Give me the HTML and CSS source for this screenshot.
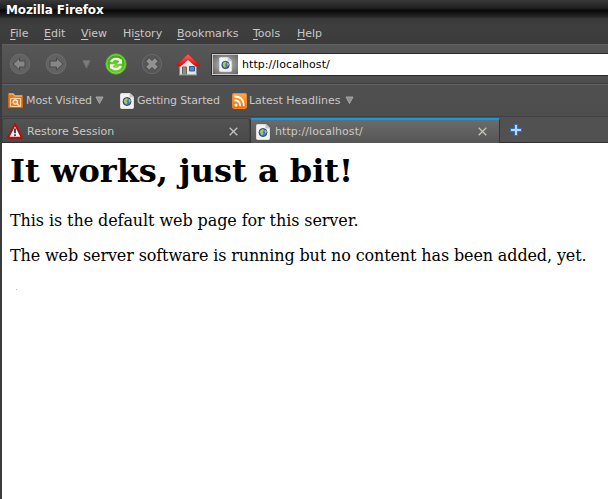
FILE: index.html
```html
<!DOCTYPE html>
<html lang="en">
<head>
<meta charset="utf-8">
<title>Mozilla Firefox</title>
<link rel="stylesheet" href="styles.css">
</head>
<body>
<svg width="0" height="0" class="defs">
  <defs>
    <linearGradient id="orange" x2="0" y2="1"><stop stop-color="#ffa94a"/><stop offset="1" stop-color="#e96c05"/></linearGradient>
    <linearGradient id="red" x2="0" y2="1"><stop stop-color="#ff6a60"/><stop offset="1" stop-color="#d50c0c"/></linearGradient>
    <radialGradient id="green" cx=".5" cy=".65"><stop stop-color="#8be03c"/><stop offset="1" stop-color="#45a81a"/></radialGradient>
    <symbol id="page" viewBox="0 0 14 16">
      <path d="M.5 1.500q0-1 1-1H10L13.500 4v10.500q0 1-1 1h-11q-1 0-1-1z" fill="#f3f3f1" stroke="#deded9"/>
      <path d="M10 .5V4h3.500z" fill="#cfcfca" stroke="#b5b5b0" stroke-width=".6"/>
      <circle cx="7" cy="8.500" r="4" fill="#4878b4" stroke="#20446e" stroke-width=".9"/>
      <path d="M3.800 7.500Q5 5 7 5L8 6.500 6.500 8l1 1.500L6 11.500 4.500 9.500zM8.500 6.500l1.500-.5.8 2-1.300 2z" fill="#a9c46a"/>
    </symbol>
  </defs>
</svg>
<div class="window">
  <header class="title">Mozilla Firefox</header>
  <nav class="menu">
    <span><u>F</u>ile</span><span><u>E</u>dit</span><span><u>V</u>iew</span><span>Hi<u>s</u>tory</span><span><u>B</u>ookmarks</span><span><u>T</u>ools</span><span><u>H</u>elp</span>
  </nav>
  <div class="toolbar">
    <svg class="back" width="22" height="22" viewBox="0 0 22 22"><circle cx="11" cy="11" r="9.800" fill="#626262" stroke="#6d6d6d"/><path d="M4 11L10.500 5V8H16v6h-5.500v3z" fill="#868686" stroke="#484848"/></svg>
    <svg class="forward" width="22" height="22" viewBox="0 0 22 22"><circle cx="11" cy="11" r="9.800" fill="#626262" stroke="#6d6d6d"/><path d="M18 11L11.500 5V8H5v6h6.500v3z" fill="#868686" stroke="#484848"/></svg>
    <svg class="history" width="9" height="9" viewBox="0 0 9 9"><path d="M1 .7h7L4.500 8z" fill="#7d7d7d" stroke="#727272"/></svg>
    <svg class="reload" width="22" height="22" viewBox="0 0 22 22"><circle cx="11" cy="11" r="10.200" fill="url(#green)" stroke="#55b325"/><circle cx="11" cy="11" r="9.200" fill="none" stroke="#a2e770" stroke-width=".7"/><path d="M6 9Q8 5.300 12 6t3.500 3M16 13Q14 16.700 10 16t-3.500-3" fill="none" stroke="#edf4e8" stroke-width="2.400"/><path d="M17 6v4.700h-5zM5 16v-4.700h5z" fill="#edf4e8"/></svg>
    <svg class="stop" width="22" height="22" viewBox="0 0 22 22"><circle cx="11" cy="11" r="9.700" fill="#575757" stroke="#6b6b6b"/><path d="M6.300 6.300l9.400 9.400m0-9.400l-9.400 9.400" stroke="#464646" stroke-width="5.400"/><path d="M6.700 6.700l8.600 8.600m0-8.600l-8.600 8.600" stroke="#929292" stroke-width="4.200"/></svg>
    <svg class="home" width="24" height="23" viewBox="0 0 24 23"><path d="M4 10l8-7 8 7v11.500H4z" fill="#e6e6e3" stroke="#c8c8c4"/><path d="M12 .8L.8 11.300l.7 1.700h3L12 6.500l7.500 6.500h3l.7-1.700z" fill="url(#red)" stroke="#c91616" stroke-width=".8"/><path d="M6.500 14h4v7.500h-4z" fill="#8a8a82" stroke="#686860"/><path d="M13.500 13.500h5v4.500h-5z" fill="#5689c7" stroke="#315c92"/><path d="M3 21.800h18" stroke="#aaa"/></svg>
    <div class="url"><span class="identity"><svg width="13" height="15"><use href="#page"/></svg></span><span class="address">http://localhost/</span></div>
  </div>
  <div class="bookmarks">
    <svg class="visited" width="15" height="15" viewBox="0 0 15 15"><path d="M.5.5h5l1 2h8v12H.5z" fill="#e07c28" stroke="#d66708"/><path d="M1 1h4.500L6.500 3H14" stroke="#ffc58a" fill="none"/><path d="M2.500 5.500h10v8h-10z" fill="none" stroke="#ffd0a0"/><circle cx="7.300" cy="9" r="2.200" fill="#e8893a" stroke="#fff1df" stroke-width="1.200"/><path d="M9 10.700l2.500 2.500" stroke="#fff1df" stroke-width="1.200"/></svg>
    <span class="label most">Most Visited</span>
    <svg class="arrow" width="9" height="9" viewBox="0 0 9 9"><path d="M1 1h7L4.500 7.500z" fill="#909090" stroke="#a5a5a5"/></svg>
    <svg class="start" width="14" height="16"><use href="#page"/></svg>
    <span class="label getting">Getting Started</span>
    <svg class="feed" width="15" height="16" viewBox="0 0 15 15" preserveAspectRatio="none"><rect x=".5" y=".5" width="14" height="14" rx="1.500" fill="url(#orange)" stroke="#ef8630"/><circle cx="4" cy="11.300" r="1.500" fill="#fff"/><path d="M2.500 6.800q5.700 0 5.700 5.700M2.500 3.300q9.300 0 9.300 9.200" fill="none" stroke="#fff" stroke-width="1.800"/></svg>
    <span class="label latest">Latest Headlines</span>
    <svg class="arrow" width="9" height="9" viewBox="0 0 9 9"><path d="M1 1h7L4.500 7.500z" fill="#909090" stroke="#a5a5a5"/></svg>
  </div>
  <div class="tabs">
    <div class="tab">
      <svg width="16" height="16" viewBox="0 0 16 16"><path d="M8 1.300L15 14.700H1z" fill="#f5f3f0" stroke="#b90b0b" stroke-width="1.900" stroke-linejoin="round"/><path d="M8 5.500v4.700M8 11.300v1.800" stroke="#292929" stroke-width="1.700"/></svg>
      <span class="label">Restore Session</span>
      <svg class="close" width="9" height="9" viewBox="0 0 9 9"><path d="M.7.7l7.600 7.600m0-7.600L.7 8.300" stroke="#c4c4c0" stroke-width="1.300"/></svg>
    </div>
    <div class="tab active">
      <svg width="14" height="16"><use href="#page"/></svg>
      <span class="label">http://localhost/</span>
      <svg class="close" width="9" height="9" viewBox="0 0 9 9"><path d="M.7.7l7.600 7.600m0-7.600L.7 8.300" stroke="#c4c4b8" stroke-width="1.300"/></svg>
    </div>
    <svg class="plus" width="12" height="12" viewBox="0 0 12 12"><path d="M4.500.5h3v4h4v3h-4v4h-3v-4h-4v-3h4z" fill="#b8d7fa" stroke="#2f6dc7"/></svg>
  </div>
  <main>
    <h1>It works, just a bit!</h1>
    <p class="intro">This is the default web page for this server.</p>
    <p>The web server software is running but no content has been added, yet.</p>
    <div class="speck"></div>
  </main>
</div>
</body>
</html>
```
FILE: styles.css
```css
* { box-sizing: border-box; }
body { margin: 0; overflow: hidden; background: #3b3b3b; }
svg { display: block; flex: none; }
.defs { position: absolute; }
.window { width: 608px; height: 499px; display: flex; flex-direction: column; font: 11px/14px "DejaVu Sans", sans-serif; color: #c8c8c5; white-space: nowrap; }
.title { height: 18px; padding: 3px 0 0 6px; font-size: 12px; line-height: 15px; letter-spacing: -0.12px; font-weight: bold; color: #fff; background: linear-gradient(#393939, #202020 45%, #080808 58%, #222 90%, #303030); border-top-left-radius: 4px; }
.menu { height: 26px; padding: 9px 0 0 10px; display: grid; grid-template-columns: 34px 37px 42px 54px 76px 44px 1fr; background: linear-gradient(#393939, #3f3f3f 30%, #3b3b3b); }
.menu u { text-underline-offset: 2px; text-decoration-thickness: 1px; }
.toolbar { height: 40px; margin-left: 2px; padding-left: 7px; display: flex; align-items: center; border-top: 1px solid #626262; border-bottom: 1px solid #414141; background: linear-gradient(#575757, #4d4d4d); }
.forward { margin-left: 14px; }
.history { margin-left: 15px; }
.reload { margin-left: 14px; }
.stop { margin-left: 14px; }
.home { margin-left: 13px; }
.url { flex: 1; margin-left: 11px; height: 23px; display: flex; align-items: center; color: #000; background: #fff; border: 1px solid #2d2929; border-right: 0; border-radius: 2px 0 0 2px; }
.identity { width: 26px; height: 21px; margin-right: 4px; display: flex; align-items: center; justify-content: center; border: 1px solid #ccc; border-width: 1px 0 1px 1px; background: radial-gradient(#c6c6c6, #8e8e8e 55%, #606060); }
.address { padding-top: 2px; letter-spacing: 0.06px; }
.bookmarks { height: 33px; margin-left: 2px; padding-left: 6px; display: flex; align-items: center; border-top: 1px solid #626262; border-bottom: 1px solid #414141; background: linear-gradient(#505050, #4d4d4d); }
.bookmarks .label { margin: 1px 4px 0 3px; letter-spacing: -0.08px; }
.bookmarks .most { width: 65px; }
.start { margin-left: 16px; }
.bookmarks .getting { width: 84px; letter-spacing: -0.15px; }
.feed { margin-left: 7px; }
.bookmarks .latest { width: 92px; margin-left: 2px; letter-spacing: -0.03px; }
.tabs { height: 26px; margin-left: 2px; display: flex; background: #515151; border-bottom: 1px solid #303030; }
.tab { width: 248px; height: 24px; margin-top: 1px; padding: 1px 11px 0 4px; display: flex; align-items: center; border: 1px solid #414141; border-bottom: 0; border-radius: 3px 3px 0 0; background: linear-gradient(#535353, #494949); }
.tab .label { margin-left: 4px; padding-top: 1px; }
.tab .close { margin-left: auto; }
.tab.active { width: 250px; margin-top: 0; height: 25px; padding: 0 12px 0 5px; border: 1px solid #353535; border-top: 2px solid #0b9cf2; border-bottom: 0; border-radius: 2px 2px 0 0; background: linear-gradient(#6b6b6b, #555); margin-top: 1px; }
.active .label { margin-left: 5px; padding: 0; letter-spacing: 0.06px; }
.plus { margin: 7px 0 0 10px; }
main { flex: 1; margin-left: 2px; padding: 9px 8px; background: #fff; color: #000; font: 16px/19px "DejaVu Serif", serif; }
h1 { margin: 0; font-size: 32px; line-height: 38px; }
p { margin: 21px 0 0; letter-spacing: -0.127px; }
.intro { letter-spacing: -0.09px; }
p + p { margin-top: 16px; }
.speck { width: 1px; height: 1px; margin: 24px 0 0 6px; background: #8fcdde; }
```
